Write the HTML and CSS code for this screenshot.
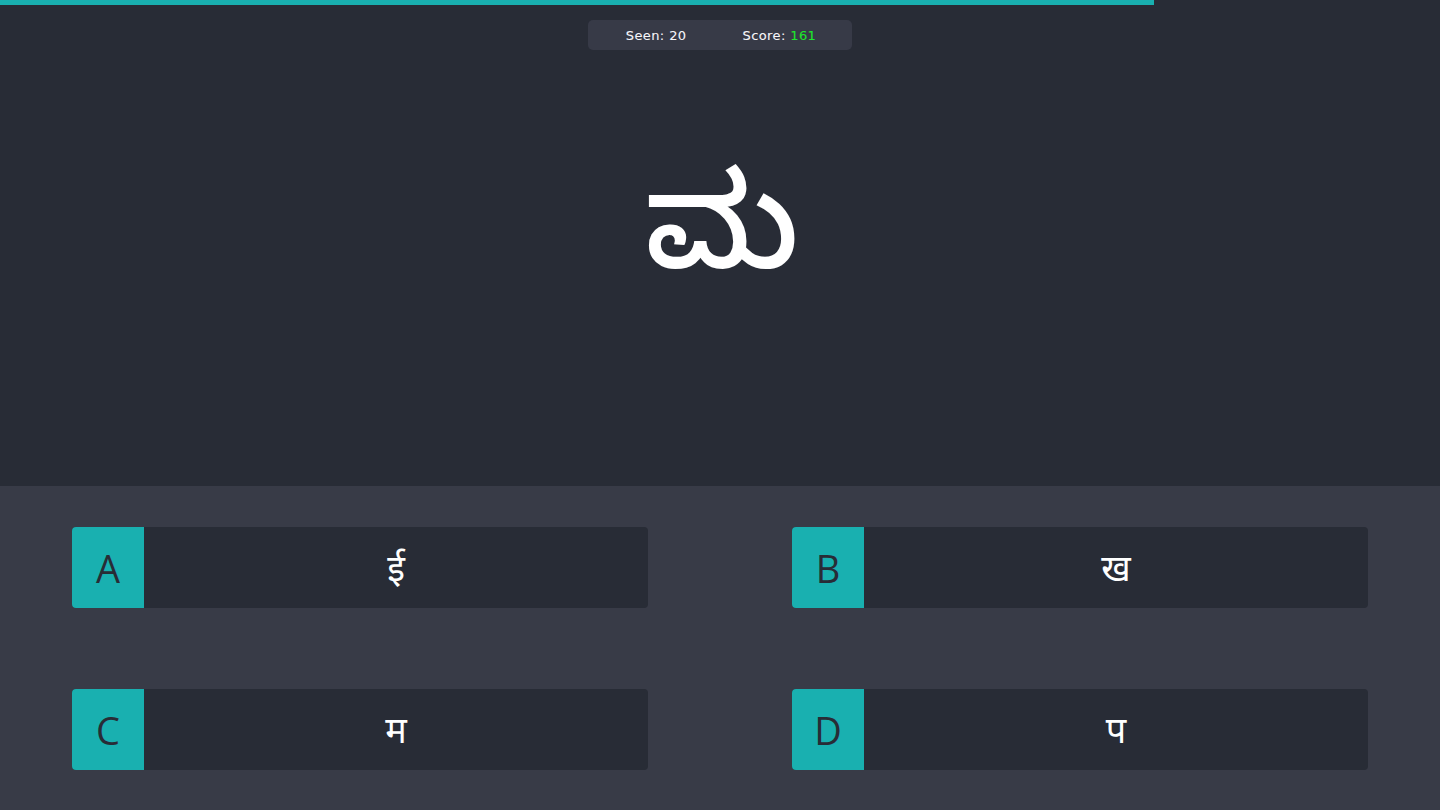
FILE: index.html
```html
<!DOCTYPE html>
<html lang="en">
<head>
<meta charset="utf-8">
<title>Quiz</title>
<link rel="stylesheet" href="styles.css">
</head>
<body>
<div class="progress"><div class="progress-fill" style="width: 80.14%"></div></div>
<main class="stage">
  <div class="stats">
    <span class="stat">Seen: 20</span>
    <span class="stat">Score: <span class="score">161</span></span>
  </div>
  <div class="glyph" lang="kn">ಮ</div>
</main>
<section class="answers">
  <div class="option"><span class="key">A</span><span class="label" lang="hi">ई</span></div>
  <div class="option"><span class="key">B</span><span class="label" lang="hi">ख</span></div>
  <div class="option"><span class="key">C</span><span class="label" lang="hi">म</span></div>
  <div class="option"><span class="key">D</span><span class="label" lang="hi">प</span></div>
</section>
</body>
</html>
```
FILE: styles.css
```css
* { box-sizing: border-box; }
html, body { margin: 0; padding: 0; }
body {
  width: 1440px;
  height: 810px;
  overflow: hidden;
  background: #282c36;
  font-family: "Open Sans", "Noto Sans", "DejaVu Sans", sans-serif;
  color: #ffffff;
  display: flex;
  flex-direction: column;
}
.progress {
  height: 5px;
  background: #282c36;
}
.progress-fill {
  height: 100%;
  background: #19b0b0;
}
.stage {
  height: 481px;
  display: flex;
  flex-direction: column;
  align-items: center;
  padding-top: 15px;
}
.stats {
  width: 264px;
  height: 30px;
  background: #373a47;
  border-radius: 5px;
  display: flex;
  justify-content: center;
  align-items: center;
  gap: 56px;
  font-family: "DejaVu Sans", sans-serif;
  font-size: 13px;
  color: #f6f6fa;
  letter-spacing: 0.4px;
  padding-left: 2px;
  -webkit-text-stroke: 0.08px #f6f6fa;
}
.score { color: #1ee62c; -webkit-text-stroke: 0.08px #1ee62c; }
.glyph {
  margin-top: 134px;
  font-family: "Noto Sans Kannada UI", "Noto Sans Kannada", "Noto Sans", "DejaVu Sans", sans-serif;
  font-size: 131px;
  line-height: 131px;
  font-weight: 500;
  color: #ffffff;
  padding-left: 4px;
}
.answers {
  flex: 1;
  background: #383b47;
  display: grid;
  grid-template-columns: 576px 576px;
  column-gap: 144px;
  row-gap: 81px;
  padding: 41px 72px 40px;
  align-content: start;
}
.option {
  height: 81px;
  display: flex;
  background: #282c36;
  border-radius: 4px;
  overflow: hidden;
}
.key {
  width: 72px;
  background: #19b0b0;
  color: #282c36;
  font-size: 38px;
  display: flex;
  align-items: center;
  justify-content: center;
}
.label {
  flex: 1;
  display: flex;
  align-items: center;
  justify-content: center;
  font-family: "Noto Sans", "DejaVu Sans", sans-serif;
  font-size: 36px;
  color: #ffffff;
}
```
